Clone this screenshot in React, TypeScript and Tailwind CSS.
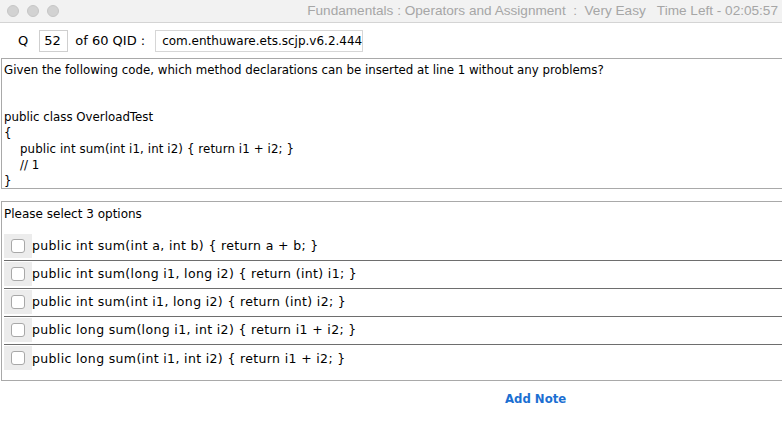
import React from "react";

const options = [
  "public int sum(int a, int b) { return a + b; }",
  "public int sum(long i1, long i2) { return (int) i1; }",
  "public int sum(int i1, long i2) { return (int) i2; }",
  "public long sum(long i1, int i2) { return i1 + i2; }",
  "public long sum(int i1, int i2) { return i1 + i2; }",
];

export default function App() {
  const body = { fontFamily: '"DejaVu Sans", Verdana, sans-serif' };
  return (
    <div className="w-[782px] h-[422px] bg-white overflow-hidden flex flex-col text-black" style={body}>
      {/* title bar */}
      <div className="h-[23px] shrink-0 flex items-center bg-[#f2f2f2] border-b border-[#d4d4d4] pl-[7px] pr-[4px]">
        <div className="flex gap-[8px]">
          <div className="w-[12px] h-[12px] rounded-full bg-[#d2d2d2] border border-[#c6c6c6]" />
          <div className="w-[12px] h-[12px] rounded-full bg-[#d2d2d2] border border-[#c6c6c6]" />
          <div className="w-[12px] h-[12px] rounded-full bg-[#d2d2d2] border border-[#c6c6c6]" />
        </div>
        <div
          className="ml-auto text-[13.6px] text-[#a6a6a6] whitespace-pre"
          style={{ fontFamily: '"Liberation Sans", Arial, sans-serif' }}
        >
          {"Fundamentals : Operators and Assignment  :  Very Easy   Time Left - 02:05:57"}
        </div>
      </div>

      {/* header row */}
      <div className="h-[35px] shrink-0 flex items-center text-[12px] pl-[18px]">
        <span className="text-[13px]">Q</span>
        <div className="ml-[11px] w-[29px] h-[22px] border border-[#cfcfcf] flex items-center pl-[4px] text-[13px]">52</div>
        <span className="ml-[7px] text-[13px]">of 60 QID :</span>
        <div className="ml-[10px] w-[208px] h-[22px] border border-[#d6d6d6] flex items-center pl-[6px]">
          com.enthuware.ets.scjp.v6.2.444
        </div>
      </div>

      {/* question */}
      <div className="ml-[1px] h-[131px] shrink-0 border-t border-l border-b border-[#a9a9a9] pl-[2px] pt-[3px] text-[11.8px] leading-[16px]">
        <div>Given the following code, which method declarations can be inserted at line 1 without any problems?</div>
        <div className="h-[31px]" />
        <div>public class OverloadTest</div>
        <div>{"{"}</div>
        <div className="pl-[16px] tracking-[0.1px]">public int sum(int i1, int i2) {"{"} return i1 + i2; {"}"}</div>
        <div className="pl-[16px]">// 1</div>
        <div>{"}"}</div>
      </div>

      {/* options */}
      <div className="mt-[12px] ml-[1px] h-[180px] shrink-0 border-t border-l border-b border-[#a9a9a9] pl-[2px] text-[12px]">
        <div className="h-[23px] flex items-center">Please select 3 options</div>
        <div className="mt-[8px]">
          {options.map((o, i) => (
            <div
              key={i}
              className={`h-[28px] flex items-center ${i < options.length - 1 ? "border-b border-[#6e6e6e]" : ""}`}
            >
              <div className="w-[28px] h-[24px] bg-[#ececec] flex items-center justify-center self-start mt-[1px]">
                <div className="w-[14px] h-[14px] rounded-[3px] border border-[#a8a8a8] bg-white" />
              </div>
              <span className="text-[12.5px] tracking-[0.35px]">{o}</span>
            </div>
          ))}
        </div>
      </div>

      {/* add note */}
      <div className="flex pl-[505px] pt-[10px]">
        <span className="text-[11.7px] font-bold text-[#1b6fd2]">Add Note</span>
      </div>
    </div>
  );
}
